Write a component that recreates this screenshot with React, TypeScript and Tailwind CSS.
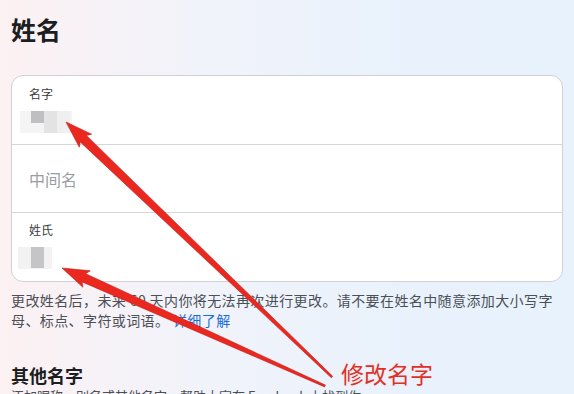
import React from "react";

type Pt = [number, number];

function arrowPoints(tail: Pt, tip: Pt, headLen: number, headHalf: number, shaftHead: number, shaftTail: number): string {
  const dx = tip[0] - tail[0];
  const dy = tip[1] - tail[1];
  const len = Math.hypot(dx, dy);
  const ux = dx / len;
  const uy = dy / len;
  const nx = -uy;
  const ny = ux;
  const bx = tip[0] - ux * headLen;
  const by = tip[1] - uy * headLen;
  const pts: Pt[] = [
    [tail[0] + nx * shaftTail, tail[1] + ny * shaftTail],
    [bx + nx * shaftHead, by + ny * shaftHead],
    [bx - ux * 3 + nx * headHalf, by - uy * 3 + ny * headHalf],
    [tip[0], tip[1]],
    [bx - ux * 3 - nx * headHalf, by - uy * 3 - ny * headHalf],
    [bx - nx * shaftHead, by - ny * shaftHead],
    [tail[0] - nx * shaftTail, tail[1] - ny * shaftTail],
  ];
  return pts.map((p) => `${p[0].toFixed(1)},${p[1].toFixed(1)}`).join(" ");
}

function Arrows() {
  const a1 = arrowPoints([332, 377], [66, 122], 24, 9, 4.5, 1);
  const a2 = arrowPoints([325, 386], [62, 268], 24, 9, 4.5, 1);
  return (
    <svg className="pointer-events-none absolute left-0 top-0" width="574" height="394" viewBox="0 0 574 394">
      <polygon points={a1} fill="#ea2820" stroke="#c21f1a" strokeWidth="0.6" strokeLinejoin="round" />
      <polygon points={a2} fill="#ea2820" stroke="#c21f1a" strokeWidth="0.6" strokeLinejoin="round" />
    </svg>
  );
}

export default function App() {
  return (
    <div
      className="relative h-[394px] w-[574px] overflow-hidden bg-[linear-gradient(90deg,#fcf1f3_0%,#f1f3fa_35%,#e9f2fc_70%,#e8f2fc_100%)]"
      style={{ fontFamily: '"Noto Sans CJK SC", "Noto Sans", sans-serif' }}
    >
      <div className="flex flex-col px-[11px]">
        <h1 className="mt-[13px] text-[25px] font-bold leading-[32px] text-[#1c1e21]">姓名</h1>

        <div className="mt-[30px] flex flex-col rounded-[12px] border border-[#cfd1d4] bg-white">
          <div className="flex h-[68px] flex-col px-[17px] pt-[9px]">
            <span className="text-[12px] leading-[18px] text-[#3a3b3c]">名字</span>
            <div className="mt-[8px] flex h-[22px] w-[52px] -ml-[9px] items-start bg-[#f4f4f5]">
              <div className="ml-[11px] h-[12px] w-[13px] bg-[#bfbfc1]" />
              <div className="h-[22px] w-[13px] bg-[#e3e3e4]" />
              <div className="h-[22px] w-[13px] bg-[#efeff0]" />
            </div>
          </div>
          <div className="h-px bg-[#d4d6d9]" />
          <div className="flex h-[67px] items-center px-[17px]">
            <span className="text-[16px] leading-[22px] text-[#9a9ca0]">中间名</span>
          </div>
          <div className="h-px bg-[#d4d6d9]" />
          <div className="flex h-[68px] flex-col px-[17px] pt-[8px]">
            <span className="text-[12px] leading-[18px] text-[#3a3b3c]">姓氏</span>
            <div className="mt-[8px] flex h-[22px] w-[34px] -ml-[11px] items-start bg-[#f2f2f3]">
              <div className="ml-[13px] h-[21px] w-[13px] bg-[#c5c5c7]" />
            </div>
          </div>
        </div>

        <p className="mt-[8px] text-[14px] leading-[20px] tracking-[0.4px] text-[#4b4f56]">
          更改姓名后，未来 60 天内你将无法再次进行更改。请不要在姓名中随意添加大小写字母、标点、字符或词语。 <span className="text-[#1a6ed8]">详细了解</span>
        </p>

        <h2 className="mt-[32px] text-[18px] font-bold leading-[26px] text-[#1c1e21]">其他名字</h2>
        <p className="text-[13px] leading-[16px] text-[#4b4f56]">
          添加昵称、别名或其他名字，帮助大家在 Facebook 上找到你。
        </p>
      </div>

      <Arrows />

      <span
        className="absolute left-[341px] top-[358px] text-[23px] leading-[30px] text-[#d8322b]"
        style={{ textShadow: "0 0 1px #ffffff, 0 0 2px #ffd6d6" }}
      >
        修改名字
      </span>
    </div>
  );
}
